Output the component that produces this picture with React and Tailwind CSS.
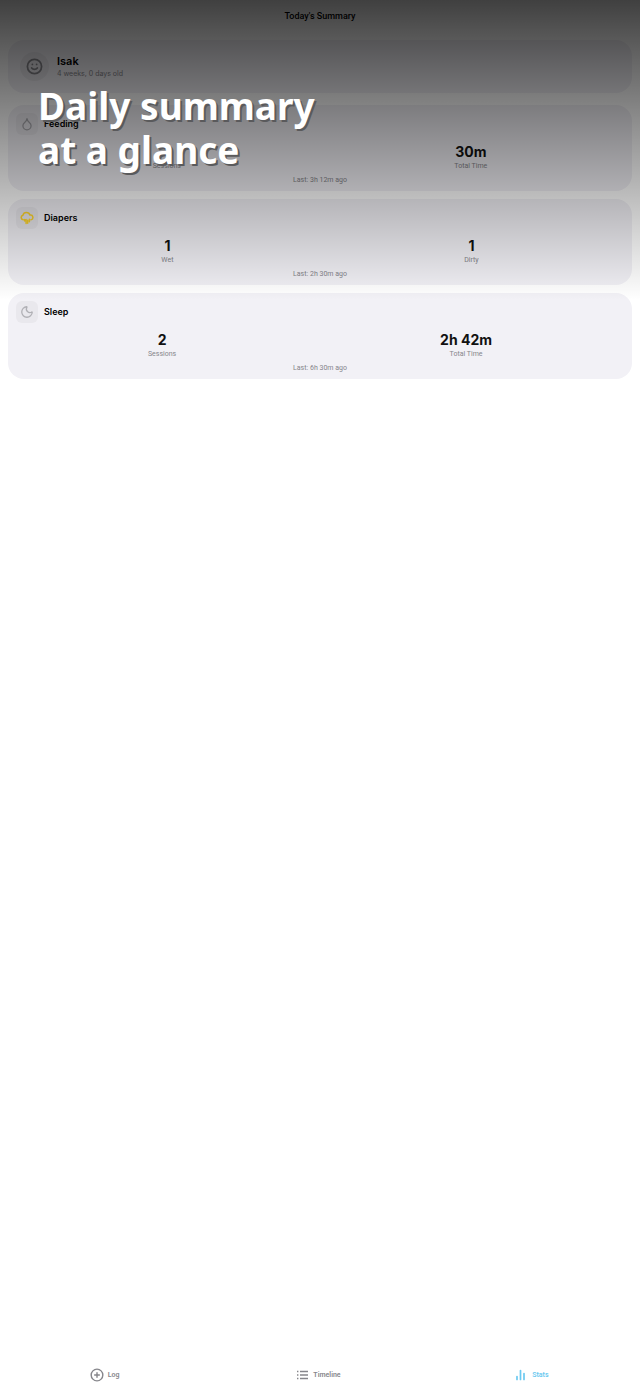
import React from 'react';
import { Smile, Droplet, Moon, CirclePlus } from 'lucide-react';

const StormIcon = () => (
    <svg viewBox="0 0 14 14" className="size-3.5" fill="none" stroke="currentColor" strokeWidth="1.5" strokeLinecap="round" strokeLinejoin="round">
        <path d="M3.2 8.8A2.3 2.3 0 0 1 2.9 4.3 C3.3 2.4 4.8 1.4 6.4 1.4 C8.1 1.4 9.5 2.4 9.9 4.1 A2.4 2.4 0 0 1 11 8.8" />
        <path d="M4.7 8.4v1.6M6.1 8.6v3.8M7.7 9.2v3M9.4 8.2v2.6" />
    </svg>
);

const ListIcon = () => (
    <svg viewBox="0 0 14 14" className="size-3.5" fill="none" stroke="currentColor" strokeWidth="1.3">
        <path d="M5 3.5h8M5 7h8M5 10.5h8" />
        <path d="M2 3.5h1.4M2 7h1.4M2 10.5h1.4" />
    </svg>
);

const BarsIcon = () => (
    <svg viewBox="0 0 14 14" className="size-3.5" fill="none" stroke="currentColor" strokeWidth="1.7" strokeLinecap="round">
        <path d="M3 8.5v3M6.5 2.5v9M10 5.5v6" />
    </svg>
);

const sections = [
    {
        title: 'Feeding',
        icon: <Droplet className="size-3.5" strokeWidth={2.2} />,
        color: 'text-[#a8a8ad]',
        stats: [['1', 'Sessions'], ['30m', 'Total Time']],
        last: '3h 12m ago',
    },
    {
        title: 'Diapers',
        icon: <StormIcon />,
        color: 'text-[#ffd52a]',
        stats: [['1', 'Wet'], ['1', 'Dirty']],
        last: '2h 30m ago',
    },
    {
        title: 'Sleep',
        icon: <Moon className="size-3.5" strokeWidth={2.2} />,
        color: 'text-[#b0b0b5]',
        stats: [['2', 'Sessions'], ['2h 42m', 'Total Time']],
        last: '6h 30m ago',
    },
];

const tabs = [
    { label: 'Log', icon: <CirclePlus className="size-3.5" strokeWidth={2.4} /> },
    { label: 'Timeline', icon: <ListIcon /> },
    { label: 'Stats', icon: <BarsIcon />, active: true },
];

const SummaryCard = ({ title, icon, color, stats, last }) => (
    <section className="rounded-2xl bg-[#f2f1f6] px-2 pt-2 pb-[7px]">
        <div className="flex items-center gap-1.5">
            <span className={`flex size-[22px] items-center justify-center rounded-md bg-[#e9e8ed] ${color}`}>{icon}</span>
            <h2 className="text-[9px] leading-3 font-semibold text-black">{title}</h2>
        </div>
        <dl className="mt-[7px] flex justify-around">
            {stats.map(([value, label]) => (
                <div key={label} className="flex flex-col-reverse items-center">
                    <dt className="font-['Roboto',sans-serif] text-[7px] leading-2 text-[#86868b]">{label}</dt>
                    <dd className="text-sm leading-5 font-bold text-[#111]">{value}</dd>
                </div>
            ))}
        </dl>
        <p className="mt-1.5 text-center font-['Roboto',sans-serif] text-[7px] leading-2 text-[#86868b]">Last: {last}</p>
    </section>
);

const App = () => {
    return (
        <div className="relative flex min-h-screen flex-col bg-white font-['Inter',sans-serif]">
            <header className="flex h-8 items-center justify-center">
                <h1 className="font-['Roboto',sans-serif] text-[9px] leading-3 font-medium text-black">Today's Summary</h1>
            </header>

            <main className="flex flex-1 flex-col gap-2 p-2">
                <section className="mb-1 flex items-center gap-2 rounded-2xl bg-[#f2f1f6] p-3">
                    <span className="flex size-[29px] items-center justify-center rounded-full bg-[#e6e5ea] text-[#86868b]">
                        <Smile className="size-[17px]" strokeWidth={2.5} />
                    </span>
                    <div>
                        <h2 className="text-[11px] leading-[14px] font-semibold text-black">Isak</h2>
                        <p className="text-[7px] leading-3 text-[#86868b]">4 weeks, 0 days old</p>
                    </div>
                </section>
                {sections.map((section) => (
                    <SummaryCard key={section.title} {...section} />
                ))}
            </main>

            <nav className="grid h-6 grid-cols-3">
                {tabs.map(({ label, icon, active }) => (
                    <button
                        key={label}
                        type="button"
                        className={`flex items-center justify-center gap-1 pr-1 font-['Roboto',sans-serif] text-[7px] font-semibold ${active ? 'text-[#6bc9f0]' : 'text-[#86868b]'}`}
                    >
                        {icon}
                        {label}
                    </button>
                ))}
            </nav>

            {/* promo banner fading over the top of the screen */}
            <div className="pointer-events-none absolute inset-x-0 top-0 h-[300px] bg-linear-to-b from-black/75 to-transparent px-[38px] pt-[84px]">
                <p className="font-['Noto_Sans',sans-serif] text-[37px] leading-11 font-bold text-white [text-shadow:2px_2px_0_#5a5a5c]">
                    Daily summary
                    <br />
                    at a glance
                </p>
            </div>
        </div>
    );
};

export default App;
